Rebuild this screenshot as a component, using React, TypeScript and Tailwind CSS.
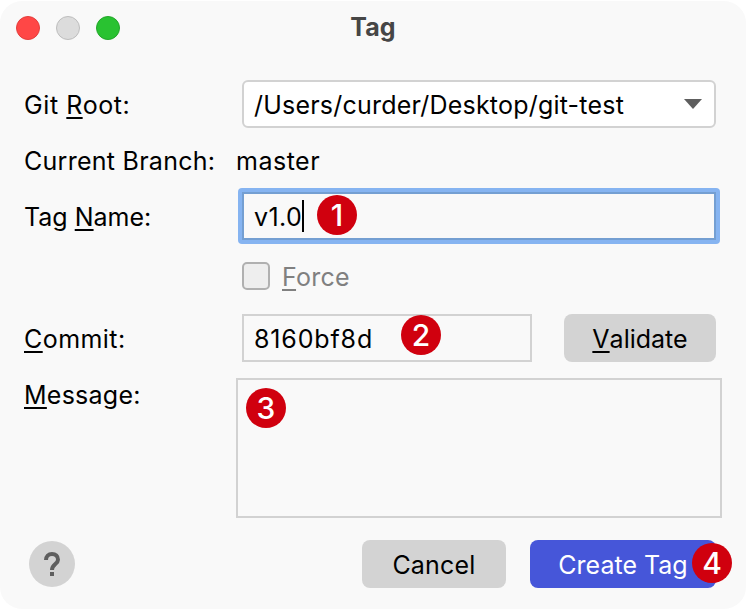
import type { ReactNode } from "react";

function Badge({ n, className }: { n: number; className: string }) {
  return (
    <span
      className={`absolute flex size-10 items-center justify-center rounded-full bg-[#d0000e] text-[30px] leading-none font-medium tracking-normal text-white ${className}`}
    >
      {n}
    </span>
  );
}

function Mnemonic({ children }: { children: ReactNode }) {
  return (
    <span className="underline decoration-2 underline-offset-[3px] [text-decoration-skip-ink:none]">
      {children}
    </span>
  );
}

export default function App() {
  return (
    <div className="h-[610px] w-[746px] bg-white pt-px font-['Inter','Liberation_Sans',sans-serif] text-[25px] leading-[30px] text-black">
      <div className="h-[608px] overflow-hidden rounded-[22px] bg-[#f9f9f9]">
        <header className="relative flex h-[79px] justify-center pt-[11px]">
          <div className="absolute top-[15px] left-4 flex gap-4">
            <span className="size-6 rounded-full border border-[#e33e3c] bg-[#ff4746]" />
            <span className="size-6 rounded-full border border-[#bdbdbd] bg-[#dcdcdc]" />
            <span className="size-6 rounded-full border border-[#23a62a] bg-[#29c231]" />
          </div>
          <h1 className="font-bold tracking-[0.1px] text-[#464646]">Tag</h1>
        </header>

        <div className="flex h-12 items-center">
          <label className="w-[242px] pt-0.5 pl-6 tracking-[0.6px]">
            Git <Mnemonic>R</Mnemonic>oot:
          </label>
          <div className="flex h-12 w-[474px] items-center justify-between rounded-[6px] border-2 border-[#d2d2d2] bg-white pr-3 pl-[10px]">
            <span className="pt-0.5 tracking-[0.21px]">/Users/curder/Desktop/git-test</span>
            <svg width="18" height="10" viewBox="0 0 18 10" fill="#5e5e5e">
              <path d="M0 0H18L9 10Z" />
            </svg>
          </div>
        </div>

        <div className="flex h-[60px] items-center pt-[5px]">
          <span className="w-[236px] pl-6 tracking-[0.27px]">Current Branch:</span>
          <span className="tracking-[0.5px]">master</span>
        </div>

        <div className="flex h-14 items-center">
          <label className="w-[238px] pl-6 pt-0.5">
            Tag <Mnemonic>N</Mnemonic>ame:
          </label>
          <div className="relative h-14 w-[482px] rounded-[4px] bg-[#86b4f1] p-1">
            <div className="flex h-12 items-center border-2 border-[#749fd2] bg-[#f9f9f9] pl-[10px]">
              <span className="pt-0.5 tracking-[0.4px]">v1.0</span>
              <span className="h-8 w-0.5 bg-black" />
            </div>
            <Badge n={1} className="top-[7px] left-[79px]" />
          </div>
        </div>

        <div className="flex h-[70px] items-start pt-[18px] pl-[242px]">
          <span className="size-7 rounded-[5px] border-2 border-[#b0b0b0] bg-[#eeeeee]" />
          <span className="ml-3 tracking-[0.25px] text-[#808080]">
            <Mnemonic>F</Mnemonic>orce
          </span>
        </div>

        <div className="flex h-12 items-center">
          <label className="w-[242px] pl-6 pt-0.5 tracking-[0.45px]">
            <Mnemonic>C</Mnemonic>ommit:
          </label>
          <div className="relative flex h-12 w-[290px] items-center border-2 border-[#d2d2d2] pt-0.5 pl-[10px] tracking-[0.85px]">
            8160bf8d
            <Badge n={2} className="top-[-1px] left-[157px]" />
          </div>
          <button className="ml-8 flex h-12 w-[152px] items-center justify-center rounded-lg bg-[#d3d3d3] pt-0.5">
            <Mnemonic>V</Mnemonic>alidate
          </button>
        </div>

        <div className="flex pt-4">
          <label className="w-[236px] pl-6 pt-0.5 tracking-[0.25px]">
            <Mnemonic>M</Mnemonic>essage:
          </label>
          <div className="relative h-[140px] w-[486px] border-2 border-[#d2d2d2]">
            <Badge n={3} className="top-2 left-2" />
          </div>
        </div>

        <footer className="flex items-center pt-[22px] pr-[30px] pl-[29px]">
          <button className="flex size-[46px] items-center justify-center rounded-full bg-[#d3d3d3]">
            <svg width="18" height="26" viewBox="0 0 18 26" fill="none">
              <path
                d="M3 9C3 5.2 5.4 3 9 3S15 5.2 15 8.7C15 13 9 13.2 9 19"
                stroke="#5e5e5e"
                strokeWidth="4"
              />
              <path d="M7 21H11V25H7Z" fill="#5e5e5e" />
            </svg>
          </button>
          <button className="ml-auto flex h-12 w-36 items-center justify-center rounded-lg bg-[#d3d3d3] pt-0.5 tracking-[0.2px]">
            Cancel
          </button>
          <div className="relative ml-6">
            <button className="flex h-12 w-[186px] items-center justify-center rounded-lg bg-[#4656d9] pt-0.5 text-white">
              Create Tag
            </button>
            <Badge n={4} className="top-[3px] left-[162px]" />
          </div>
        </footer>
      </div>
    </div>
  );
}
